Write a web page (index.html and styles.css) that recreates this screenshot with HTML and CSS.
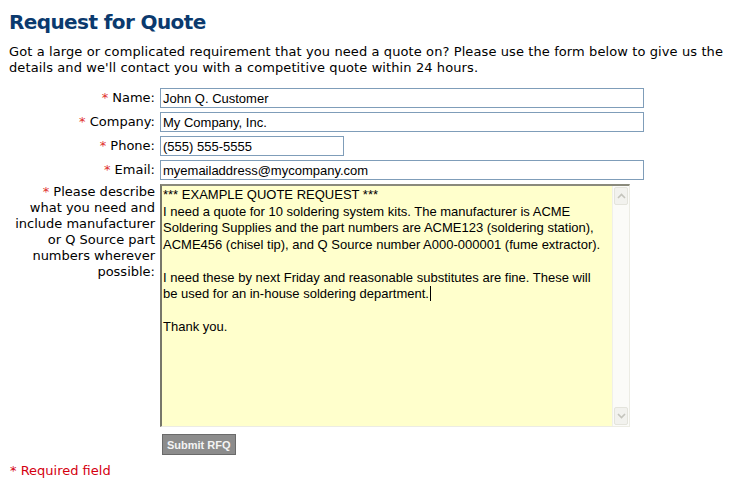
FILE: index.html
```html
<!DOCTYPE html>
<html>
  <head>
    <meta charset="utf-8" />
    <title>Request for Quote</title>
    <link rel="stylesheet" href="styles.css">
  </head>
  <body>
    <div class="page">
      <h1>Request for Quote</h1>
      <p class="intro">
        Got a large or complicated requirement that you need a quote on? Please use the form below to give us the<br>
        details and we'll contact you with a competitive quote within 24 hours.
      </p>

      <form class="rfq-form">
        <label class="field-label"><span class="req">*</span> Name:</label>
        <div class="field"><input class="text-input wide" type="text" value="John Q. Customer"></div>

        <label class="field-label"><span class="req">*</span> Company:</label>
        <div class="field"><input class="text-input wide" type="text" value="My Company, Inc."></div>

        <label class="field-label"><span class="req">*</span> Phone:</label>
        <div class="field"><input class="text-input short" type="text" value="(555) 555-5555"></div>

        <label class="field-label"><span class="req">*</span> Email:</label>
        <div class="field"><input class="text-input wide" type="text" value="myemailaddress@mycompany.com"></div>

        <label class="field-label top"><span class="req">*</span> Please describe<br>what you need and<br>include manufacturer<br>or Q Source part<br>numbers wherever<br>possible:</label>
        <div class="field">
          <div class="message-box">
            <div class="message-text">*** EXAMPLE QUOTE REQUEST ***<br>I need a quote for 10 soldering system kits. The manufacturer is ACME<br>Soldering Supplies and the part numbers are ACME123 (soldering station),<br>ACME456 (chisel tip), and Q Source number A000-000001 (fume extractor).<br><br>I need these by next Friday and reasonable substitutes are fine. These will<br>be used for an in-house soldering department.<span class="caret"></span><br><br>Thank you.</div>
            <div class="scrollbar">
              <span class="scroll-btn">
                <svg width="9" height="6" viewBox="0 0 9 6"><path d="M1 5 L4.5 1.5 L8 5" fill="none" stroke="#c4c4bc" stroke-width="1.6"/></svg>
              </span>
              <span class="scroll-btn">
                <svg width="9" height="6" viewBox="0 0 9 6"><path d="M1 1 L4.5 4.5 L8 1" fill="none" stroke="#c4c4bc" stroke-width="1.6"/></svg>
              </span>
            </div>
          </div>
        </div>

        <div></div>
        <div class="field actions"><button type="button" class="submit-btn">Submit RFQ</button></div>
      </form>

      <p class="required-note">* Required field</p>
    </div>
  </body>
</html>
```

FILE: styles.css
```css
body {
  margin: 0;
  font-family: "DejaVu Sans", Verdana, sans-serif;
  font-size: 13px;
  color: #000;
  background-color: #fff;
}

.page {
  padding: 0 9px;
}

h1 {
  margin: 0;
  padding-top: 9px;
  font-size: 20px;
  line-height: 26px;
  letter-spacing: -0.6px;
  color: #0b3a6e;
}

.intro {
  margin: 9px 0 0 0;
  line-height: 16px;
  letter-spacing: 0.1px;
  white-space: nowrap;
}

.rfq-form {
  display: grid;
  grid-template-columns: 146px 1fr;
  column-gap: 5px;
  row-gap: 4px;
  margin-top: 12px;
}

.field-label {
  text-align: right;
  line-height: 16px;
  align-self: center;
}

.field-label.top {
  align-self: start;
}

.req {
  color: #e0302c;
}

.field {
  display: flex;
}

.text-input {
  box-sizing: border-box;
  height: 20px;
  margin: 0;
  padding: 0 2px;
  border: 1px solid #7f9db9;
  font-family: "Liberation Sans", Arial, sans-serif;
  font-size: 13px;
  color: #000;
  background-color: #fff;
}

.text-input.wide {
  width: 484px;
}

.text-input.short {
  width: 184px;
}

.message-box {
  box-sizing: border-box;
  display: flex;
  width: 470px;
  height: 243px;
  border-top: 2px solid #8a8a7c;
  border-left: 2px solid #77776a;
  border-right: 1px solid #ecece4;
  border-bottom: 1px solid #ecece4;
  background-color: #ffffcc;
}

.message-text {
  flex: 1;
  padding: 1px 0 1px 1px;
  font-family: "Liberation Sans", Arial, sans-serif;
  font-size: 13px;
  line-height: 16.5px;
  white-space: nowrap;
  overflow: hidden;
}

.caret {
  display: inline-block;
  width: 1px;
  height: 15px;
  margin-left: 1px;
  vertical-align: -3px;
  background-color: #000;
}

.scrollbar {
  display: flex;
  flex-direction: column;
  justify-content: space-between;
  width: 16px;
  padding: 1px 0;
  background-color: #fbfbf8;
  border-left: 1px solid #f0f0ea;
}

.scroll-btn {
  display: flex;
  align-items: center;
  justify-content: center;
  height: 16px;
  margin: 0 1px;
  border: 1px solid #e4e4dc;
  border-radius: 2px;
  background-color: #f2f2ee;
}

.actions {
  margin-top: 3px;
  padding-left: 2px;
}

.submit-btn {
  height: 21px;
  padding: 0 4px;
  border: 1px solid #6a6a6a;
  background-color: #8c8c8c;
  color: #f4f4f4;
  font-family: "Liberation Sans", Tahoma, sans-serif;
  font-size: 11px;
  font-weight: bold;
  cursor: pointer;
}

.required-note {
  margin: 8px 0 0 1px;
  color: #d40010;
  line-height: 16px;
}
```
